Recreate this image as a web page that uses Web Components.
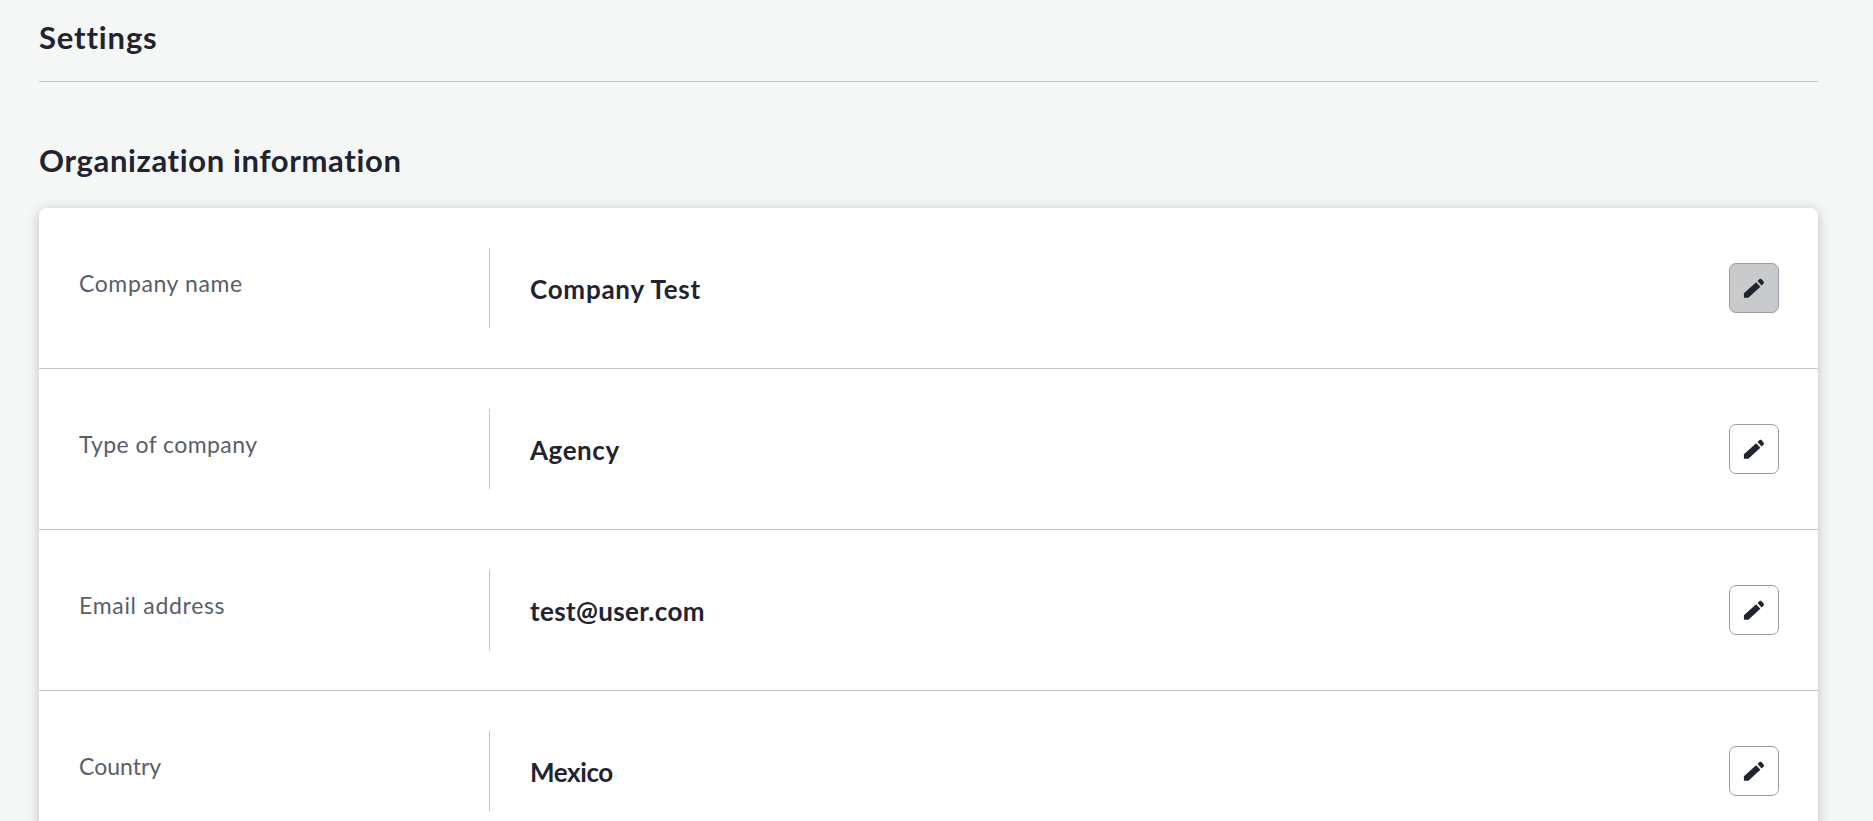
<!DOCTYPE html>
<html>
<head>
<meta charset="utf-8">
<title>Settings</title>
<style>
    html, body { margin: 0; height: 100%; overflow: hidden; }
    body {
        background: #f5f7f7;
        font-family: "Lato", "Open Sans", sans-serif;
        color: #1f2430;
    }
</style>
</head>
<body>
<settings-page>
    <info-row label="Company name" value="Company Test" label-track="0.6" value-track="0.75" active></info-row>
    <info-row label="Type of company" value="Agency" label-track="0.42" value-track="0.55"></info-row>
    <info-row label="Email address" value="test@user.com" label-track="0.69" value-track="0.35"></info-row>
    <info-row label="Country" value="Mexico" label-track="0" value-track="-0.4"></info-row>
</settings-page>

<script>
class SettingsPage extends HTMLElement {
    connectedCallback() {
        this.attachShadow({ mode: 'open' });
        this.shadowRoot.innerHTML = `
            <style>
                :host {
                    display: block;
                    padding: 0 55px 0 39px;
                }
                .header {
                    height: 82px;
                    box-sizing: border-box;
                    padding-top: 17px;
                    border-bottom: 1px solid #c4c6c8;
                    font: 700 31px/40px "Lato", sans-serif;
                    letter-spacing: 0.85px;
                }
                h2 {
                    margin: 57px 0 0;
                    font: 700 31px/42px "Lato", sans-serif;
                    letter-spacing: 0.65px;
                }
                .card {
                    margin-top: 27px;
                    background: #fff;
                    border-radius: 8px;
                    box-shadow: 0 2px 12px rgba(31, 34, 41, 0.26);
                }
            </style>
            <div class="header">Settings</div>
            <h2>Organization information</h2>
            <div class="card"><slot></slot></div>
        `;
    }
}

class InfoRow extends HTMLElement {
    connectedCallback() {
        this.attachShadow({ mode: 'open' });
        const active = this.hasAttribute('active') ? 'active' : '';
        this.shadowRoot.innerHTML = `
            <style>
                :host {
                    display: flex;
                    align-items: flex-start;
                    height: 161px;
                    box-sizing: border-box;
                    padding: 40px 39px 0 40px;
                    border-bottom: 1px solid #c4c6c8;
                }
                .label {
                    width: 411px;
                    height: 80px;
                    box-sizing: border-box;
                    padding-top: 19px;
                    border-right: 1px solid #c4c6c8;
                    color: #5a5e68;
                    font: 400 23px/32px "Lato", sans-serif;
                    letter-spacing: ${this.getAttribute('label-track')}px;
                }
                .value {
                    flex: 1;
                    padding: 24px 0 0 40px;
                    font: 700 26px/34px "Lato", sans-serif;
                    letter-spacing: ${this.getAttribute('value-track')}px;
                }
                button {
                    width: 50px;
                    height: 50px;
                    margin-top: 15px;
                    padding: 0;
                    display: flex;
                    align-items: center;
                    justify-content: center;
                    background: #fff;
                    border: 1px solid #9a9ea8;
                    border-radius: 7px;
                }
                button.active { background: #c9cacc; }
                svg { width: 24px; height: 24px; fill: #1f2430; }
            </style>
            <div class="label">${this.getAttribute('label')}</div>
            <div class="value">${this.getAttribute('value')}</div>
            <button class="${active}" aria-label="Edit">
                <svg viewBox="13.75 15.45 22 22"><path d="M15.5 31.2V35.5H19.6L30.6 25.4 26.7 21.2zM28 20 31.7 24.1 33.4 22.5C34 21.9 34 21 33.5 20.4L31.7 18.5C31.1 17.9 30.2 17.9 29.6 18.5z"/></svg>
            </button>
        `;
    }
}

customElements.define('settings-page', SettingsPage);
customElements.define('info-row', InfoRow);
</script>
</body>
</html>
